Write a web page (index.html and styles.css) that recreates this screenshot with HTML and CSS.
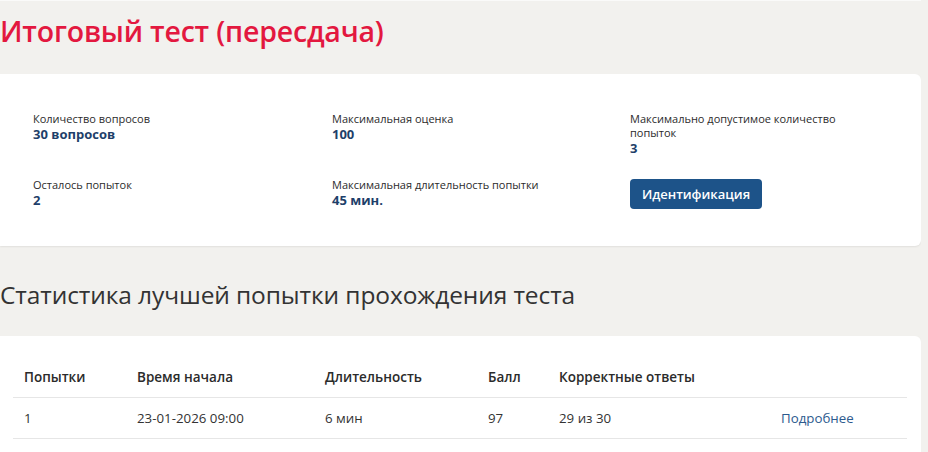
FILE: index.html
```html
<html>
	<head>
		<title>Итоговый тест (пересдача)</title>
		<meta charset="utf-8">
		<link rel="stylesheet" href="styles.css">
	</head>
	<body>

		<h1 class="pageTitle">Итоговый тест (пересдача)</h1>

		<div class="card infoCard">
			<div class="infoItem">
				<div class="infoLabel">Количество вопросов</div>
				<div class="infoValue">30 вопросов</div>
			</div>
			<div class="infoItem">
				<div class="infoLabel">Максимальная оценка</div>
				<div class="infoValue">100</div>
			</div>
			<div class="infoItem">
				<div class="infoLabel">Максимально допустимое количество<br/>попыток</div>
				<div class="infoValue">3</div>
			</div>
			<div class="infoItem">
				<div class="infoLabel">Осталось попыток</div>
				<div class="infoValue">2</div>
			</div>
			<div class="infoItem">
				<div class="infoLabel">Максимальная длительность попытки</div>
				<div class="infoValue">45 мин.</div>
			</div>
			<div class="infoItem">
				<button class="idButton">Идентификация</button>
			</div>
		</div>

		<h2 class="sectionTitle">Статистика лучшей попытки прохождения теста</h2>

		<div class="card tableCard">
			<table class="statTable">
				<colgroup>
					<col style="width: 113px">
					<col style="width: 188px">
					<col style="width: 163px">
					<col style="width: 71px">
					<col style="width: 222px">
					<col>
				</colgroup>
				<thead>
					<tr>
						<th>Попытки</th>
						<th>Время начала</th>
						<th>Длительность</th>
						<th>Балл</th>
						<th>Корректные ответы</th>
						<th></th>
					</tr>
				</thead>
				<tbody>
					<tr>
						<td>1</td>
						<td>23-01-2026 09:00</td>
						<td>6 мин</td>
						<td>97</td>
						<td>29 из 30</td>
						<td><a href="#" class="moreLink">Подробнее</a></td>
					</tr>
				</tbody>
			</table>
		</div>

	</body>
</html>
```

FILE: styles.css
```css
body
{
	margin: 0;
	padding-top: 4px;
	background-color: #f2f1ee;
	border-top: 1px solid #fafaf9;
	font-family: "Open Sans", "Noto Sans", sans-serif;
	color: #333333;
	width: 921px;
}

.pageTitle
{
	margin: 0;
	padding-top: 7px;
	height: 60px;
	box-sizing: border-box;
	color: #e3183f;
	font-family: "Open Sans", sans-serif;
	font-weight: 600;
	font-size: 28.5px;
	line-height: 38px;
	letter-spacing: -0.2px;
}

.card
{
	background-color: white;
	border-radius: 0 6px 6px 0;
	box-shadow: 0 1px 2px rgba(0, 0, 0, 0.07);
}

.infoCard
{
	margin-top: 9px;
	display: grid;
	grid-template-columns: 299px 298px auto;
	row-gap: 22px;
	padding: 38px 0 37px 33px;
}

.infoLabel
{
	font-size: 11px;
	line-height: 14px;
	color: #2b2b2b;
}

.infoValue
{
	font-size: 13px;
	font-weight: 700;
	line-height: 16px;
	color: #1e3f6a;
}

.idButton
{
	margin-top: 1px;
	width: 132px;
	height: 30px;
	border: none;
	border-radius: 4px;
	background-color: #1d5389;
	color: white;
	font-family: "Open Sans", sans-serif;
	font-size: 13px;
	font-weight: 600;
}

.sectionTitle
{
	margin: 0;
	padding-top: 33px;
	height: 90px;
	box-sizing: border-box;
	font-weight: 400;
	font-size: 24.5px;
	line-height: 32px;
	color: #333333;
	letter-spacing: -0.1px;
}

.tableCard
{
	padding: 21px 14px 20px 13px;
	border-radius: 0 6px 0 0;
}

.statTable
{
	width: 100%;
	border-collapse: collapse;
	table-layout: fixed;
	font-size: 13.3px;
}

.statTable th
{
	text-align: left;
	font-weight: 600;
	font-size: 13.5px;
	padding: 0 0 0 11px;
	height: 40px;
	border-bottom: 1px solid #e6e6e6;
	color: #2b2b2b;
}

.statTable td
{
	padding: 0 0 0 11px;
	height: 41px;
	border-bottom: 1px solid #e6e6e6;
	color: #333333;
}

.moreLink
{
	color: #2c5a8e;
	text-decoration: none;
}
```
